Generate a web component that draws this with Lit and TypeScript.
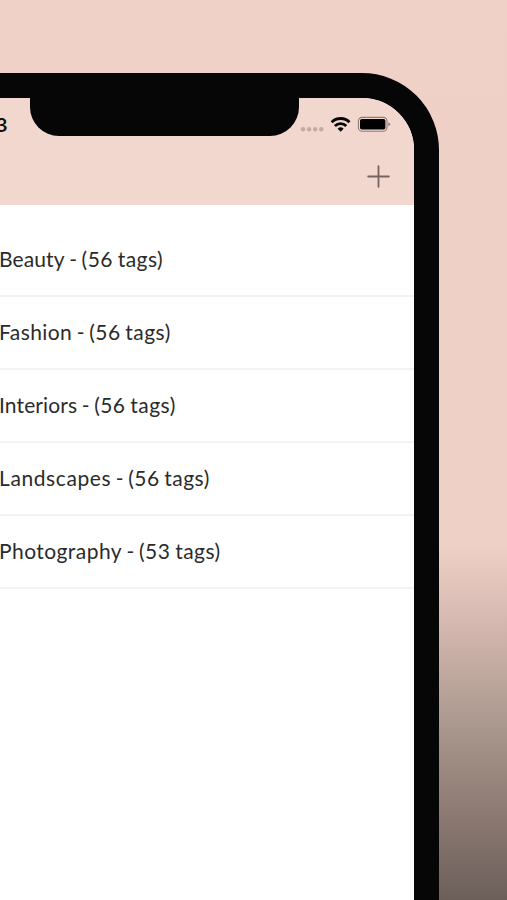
import { LitElement, html, css } from "lit";
import { customElement } from "lit/decorators.js";

interface TagGroup {
  name: string;
  count: number;
  spacing: number;
}

const groups: TagGroup[] = [
  { name: "Beauty", count: 56, spacing: 0.1 },
  { name: "Fashion", count: 56, spacing: 0.42 },
  { name: "Interiors", count: 56, spacing: 0.12 },
  { name: "Landscapes", count: 56, spacing: 0.6 },
  { name: "Photography", count: 53, spacing: 0.44 },
];

@customElement("status-icons")
class StatusIcons extends LitElement {
  static styles = css`
    :host { display: block; }
    svg { display: block; }
  `;
  render() {
    return html`
      <svg width="92" height="20" viewBox="300 114 92 20">
        <g fill="#c3aaa2">
          <circle cx="303" cy="129.3" r="2.2" />
          <circle cx="309.1" cy="129.3" r="2.2" />
          <circle cx="315.2" cy="129.3" r="2.2" />
          <circle cx="321.3" cy="129.3" r="2.2" />
        </g>
        <g fill="none" stroke="#050505" stroke-width="2.8">
          <path d="M331.7 122.2A12.6 12.6 0 0 1 349.5 122.2" />
          <path d="M334.9 126A8 8 0 0 1 346.3 126" />
        </g>
        <path d="M337.6 128.7A4.4 4.4 0 0 1 343.6 128.7L340.6 131.7Z" fill="#050505" />
        <rect x="358.4" y="117.4" width="28.6" height="13.8" rx="3.8" fill="none" stroke="#8d7b76" stroke-width="1.1" />
        <rect x="360" y="119" width="25.4" height="10.6" rx="1.8" fill="#000" />
        <path d="M388.4 122.2Q390.2 123 390.2 124.2T388.4 126.2Z" fill="#8d7b76" />
      </svg>
    `;
  }
}

@customElement("app-root")
class AppRoot extends LitElement {
  static styles = css`
    :host {
      display: block;
      height: 900px;
      overflow: hidden;
      box-sizing: border-box;
      padding-top: 73px;
      background: linear-gradient(#f0d1c7 0, #efd0c6 545px, #d2b6ad 630px, #a8968c 730px, #8a7871 820px, #6c5f5a 900px);
      font-family: Lato, sans-serif;
      color: #2b2b2b;
    }
    .phone {
      box-sizing: border-box;
      width: 550px;
      height: 1100px;
      margin-left: -111px;
      border: 25px solid #060606;
      border-radius: 77px;
      background: #fff;
      overflow: hidden;
    }
    .head {
      position: relative;
      height: 107px;
      background: #f2d7ce;
      padding-left: 86px;
      display: flex;
      flex-direction: column;
    }
    .notch {
      position: absolute;
      left: 115.5px;
      top: -1px;
      width: 269.5px;
      height: 38.5px;
      border-radius: 0 0 29px 29px;
      background: #060606;
    }
    .status {
      display: flex;
      justify-content: space-between;
      height: 52px;
      padding: 16px 22px 0 0;
      box-sizing: border-box;
    }
    .time {
      font: 600 19px/24px Inter, sans-serif;
      color: #111;
      margin-left: -4.5px;
    }
    .bar {
      display: flex;
      justify-content: flex-end;
      padding: 15px 24px 0 0;
    }
    .rows { padding: 18px 0 0 85px; }
    .row {
      height: 73px;
      box-sizing: border-box;
      border-bottom: 2px solid #f3f3f3;
      font-size: 21px;
      line-height: 69px;
      white-space: pre;
    }
    .row:first-child { height: 74px; line-height: 71px; }
    .dash { word-spacing: -0.8px; }
    .tags { letter-spacing: 0.45px; word-spacing: -1px; }
  `;
  render() {
    return html`
      <div class="phone">
        <div class="head">
          <div class="notch"></div>
          <div class="status">
            <span class="time">3</span>
            <status-icons></status-icons>
          </div>
          <div class="bar">
            <svg width="23" height="23" viewBox="0 0 23 23" stroke="#75625d" stroke-width="1.8" stroke-linecap="round">
              <path d="M11.5 1.2V21.8M1.2 11.5H21.8" />
            </svg>
          </div>
        </div>
        <div class="rows">
          ${groups.map(
            (g) => html`<div class="row"><span style="letter-spacing:${g.spacing}px">${g.name}</span><span class="dash"> - </span><span class="tags">(${g.count} tags)</span></div>`
          )}
        </div>
      </div>
    `;
  }
}
